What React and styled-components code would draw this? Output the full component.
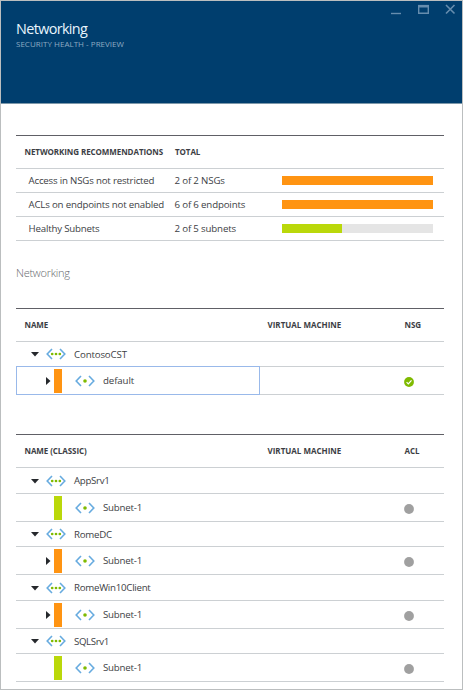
import React from 'react';
import styled, { createGlobalStyle } from 'styled-components';

const GlobalStyle = createGlobalStyle`
  * { box-sizing: border-box; }
  body { margin: 0; background: #fff; }
`;

const ORANGE = '#ff9412';
const GREEN = '#bad80a';

const Blade = styled.main`
  width: 463px;
  height: 690px;
  overflow: hidden;
  border: 1px solid #bbbebf;
  background: #fff;
  font: 500 9.7px/14px 'Open Sans', 'Noto Sans', sans-serif;
  color: #3c3e44;
  white-space: nowrap;
`;

const Header = styled.header`
  display: flex;
  justify-content: space-between;
  height: 103px;
  padding: 0 6px 0 15px;
  background: #003e6e;
  border-bottom: 1px solid #7d98aa;
`;

const Heading = styled.div`
  padding-top: 18px;
`;

const Title = styled.h1`
  margin: 0;
  font-size: 14.4px;
  line-height: 20px;
  font-weight: 400;
  letter-spacing: -0.64px;
  color: #e8f5fd;
`;

const Subtitle = styled.p`
  margin: 0;
  font-size: 8px;
  line-height: 10px;
  font-weight: 400;
  letter-spacing: 0.02px;
  color: #8daac2;
`;

const WindowControls = styled.svg`
  width: 66px;
  height: 18px;
  fill: none;
  stroke: #668dae;
`;

const Content = styled.div`
  padding: 31px 18px 0 15px;
`;

const Table = styled.section`
  border-top: 1px solid #606066;
  margin-bottom: ${(p) => p.$gap || 0}px;
`;

const Row = styled.div`
  display: flex;
  align-items: center;
  height: ${(p) => p.$height}px;
  border-bottom: 1px solid #ccd0d3;
`;

const HeadRow = styled(Row)`
  padding: 0 0 0 8.5px;
  font-size: 8px;
  font-weight: 700;
  letter-spacing: -0.08px;
`;

const NameHead = styled.span`
  width: ${(p) => p.$width}px;
`;

const MachineHead = styled.span`
  width: 137px;
  letter-spacing: 0;
`;

const Recommendation = styled.span`
  width: 158.5px;
  padding-left: 12.5px;
  letter-spacing: -0.19px;
`;

const Total = styled.span`
  width: 107.5px;
  letter-spacing: -0.16px;
`;

const Meter = styled.div`
  width: 150.5px;
  height: 9px;
  margin-bottom: 1px;
  background: #e5e5e5;
`;

const MeterFill = styled.div`
  height: 100%;
  background: ${(p) => p.$color};
`;

const SectionTitle = styled.h2`
  margin: 24px 0 27px;
  font-size: 11px;
  line-height: 16px;
  font-weight: 300;
  letter-spacing: -0.27px;
  color: #66696e;
`;

const NameCell = styled.div`
  display: flex;
  align-items: center;
  width: 244px;
  height: ${(p) => (p.$selected ? 'calc(100% + 2px)' : '100%')};
  margin: ${(p) => (p.$selected ? '-1px 0' : '0')};
  padding-left: ${(p) => p.$indent}px;
  outline: ${(p) => (p.$selected ? '1px solid #99b9ea' : 'none')};
  outline-offset: -1px;
`;

const Toggle = styled.svg`
  flex: none;
  width: ${(p) => p.$width}px;
  height: 8px;
  margin-right: ${(p) => p.$gap}px;
  fill: #25282c;
`;

const Strip = styled.div`
  width: 8px;
  height: 24px;
  margin-right: 13px;
  background: ${(p) => p.$color};
`;

const NetworkGlyph = styled.svg`
  flex: none;
  width: 20px;
  height: 12px;
  margin-right: ${(p) => p.$gap}px;
`;

const Name = styled.span`
  padding-top: 1px;
  letter-spacing: ${(p) => p.$tracking}px;
`;

const StatusIcon = styled.svg`
  width: 10px;
  height: 10px;
  margin: 3px 0 0 144px;
`;

const recommendations = [
  { name: 'Access in NSGs not restricted', total: '2 of 2 NSGs', value: 100, color: ORANGE },
  { name: 'ACLs on endpoints not enabled', total: '6 of 6 endpoints', value: 100, color: ORANGE },
  { name: 'Healthy Subnets', total: '2 of 5 subnets', value: 40, color: GREEN },
];

const classicNetworks = [
  { name: 'AppSrv1', tracking: -0.31, color: GREEN, height: 26 },
  { name: 'RomeDC', tracking: -0.26, color: ORANGE, expandable: true, height: 25 },
  { name: 'RomeWin10Client', tracking: -0.26, color: ORANGE, expandable: true, height: 26 },
  { name: 'SQLSrv1', tracking: -0.38, color: GREEN, height: 25 },
];

function NetworkIcon({ dots, gap }) {
  return (
    <NetworkGlyph viewBox="0 0 20 12" $gap={gap}>
      <path d="M6 1 1.2 6 6 11" fill="none" stroke="#67abdf" strokeWidth="1.6" />
      <path d="M14 1l4.8 5L14 11" fill="none" stroke="#67abdf" strokeWidth="1.6" />
      {dots.map((x) => (
        <circle key={x} cx={x} cy="6" r={dots.length > 1 ? 1.35 : 1.8} fill="#7fba00" />
      ))}
    </NetworkGlyph>
  );
}

function NetworkRow({ name, tracking, height }) {
  return (
    <Row $height={height}>
      <NameCell $indent={15}>
        <Toggle $width={8} $gap={7} viewBox="0 0 8 8">
          <path d="M0 2h8L4 6.5z" />
        </Toggle>
        <NetworkIcon dots={[6.2, 10, 13.8]} gap={8} />
        <Name $tracking={tracking}>{name}</Name>
      </NameCell>
    </Row>
  );
}

function SubnetRow({ name, color, expandable, selected, healthy, tracking = -0.21 }) {
  return (
    <Row $height={28}>
      <NameCell $indent={expandable ? 30 : 38} $selected={selected}>
        {expandable && (
          <Toggle $width={5} $gap={3} viewBox="0 0 5 8">
            <path d="M0 0l4.5 4L0 8z" />
          </Toggle>
        )}
        <Strip $color={color} />
        <NetworkIcon dots={[10]} gap={8} />
        <Name $tracking={tracking}>{name}</Name>
      </NameCell>
      <StatusIcon viewBox="0 0 10 10">
        <circle cx="5" cy="5" r="4.9" fill={healthy ? '#7fba00' : '#a0a0a0'} />
        {healthy && <path d="M2.6 5.1l1.7 1.7 3.2-3.5" fill="none" stroke="#fff" strokeWidth="1.2" />}
      </StatusIcon>
    </Row>
  );
}

export default function App() {
  return (
    <Blade>
      <GlobalStyle />
      <Header>
        <Heading>
          <Title>Networking</Title>
          <Subtitle>SECURITY HEALTH - PREVIEW</Subtitle>
        </Heading>
        <WindowControls viewBox="0 0 66 18">
          <path d="M1 12.5h10" strokeWidth="1.4" />
          <path d="M28.7 5v7.3h9.6V5" strokeWidth="1.4" />
          <path d="M28 5.2h11" strokeWidth="2.6" />
          <path d="M56 4l8.5 8.5M64.5 4L56 12.5" strokeWidth="1.6" />
        </WindowControls>
      </Header>
      <Content>
        <Table>
          <HeadRow $height={33}>
            <NameHead $width={150.5}>NETWORKING RECOMMENDATIONS</NameHead>
            <span>TOTAL</span>
          </HeadRow>
          {recommendations.map((r) => (
            <Row key={r.name} $height={24}>
              <Recommendation>{r.name}</Recommendation>
              <Total>{r.total}</Total>
              <Meter>
                <MeterFill $color={r.color} style={{ width: `${r.value}%` }} />
              </Meter>
            </Row>
          ))}
        </Table>
        <SectionTitle>Networking</SectionTitle>
        <Table $gap={39}>
          <HeadRow $height={33}>
            <NameHead $width={243}>NAME</NameHead>
            <MachineHead>VIRTUAL MACHINE</MachineHead>
            <span>NSG</span>
          </HeadRow>
          <NetworkRow name="ContosoCST" tracking={-0.15} height={25} />
          <SubnetRow name="default" tracking={-0.1} color={ORANGE} expandable selected healthy />
        </Table>
        <Table>
          <HeadRow $height={33}>
            <NameHead $width={243}>NAME (CLASSIC)</NameHead>
            <MachineHead>VIRTUAL MACHINE</MachineHead>
            <span>ACL</span>
          </HeadRow>
          {classicNetworks.map((n) => (
            <React.Fragment key={n.name}>
              <NetworkRow name={n.name} tracking={n.tracking} height={n.height} />
              <SubnetRow name="Subnet-1" color={n.color} expandable={n.expandable} />
            </React.Fragment>
          ))}
        </Table>
      </Content>
    </Blade>
  );
}
